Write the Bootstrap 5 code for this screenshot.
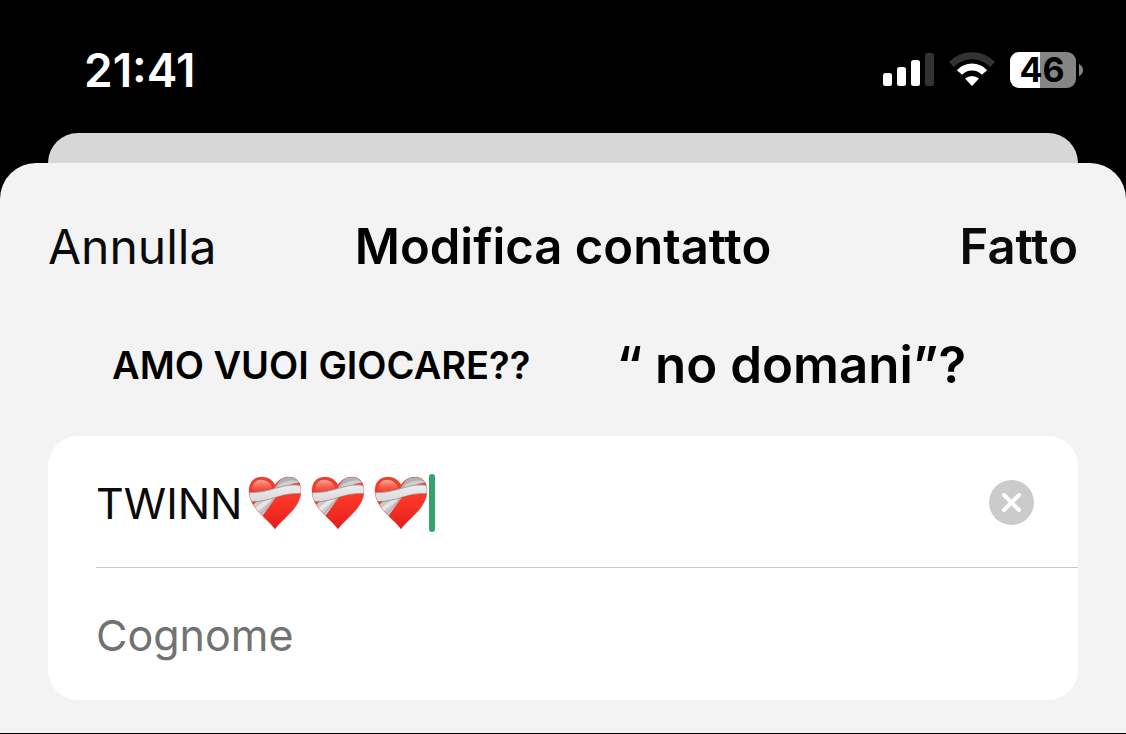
<!DOCTYPE html>
<html lang="it">
<head>
<meta charset="utf-8">
<meta name="viewport" content="width=device-width, initial-scale=1">
<title>Modifica contatto</title>
<link href="https://cdn.jsdelivr.net/npm/bootstrap@5.3.0/dist/css/bootstrap.min.css" rel="stylesheet">
<style>
  body { background: #000; font-family: Inter, "Liberation Sans", sans-serif; color: #0b0b0b; }
  .statusbar { height: 133px; padding: 6px 42px 0 84px; color: #fff; }
  .clock { font-size: 46px; line-height: 60px; font-weight: 600; }
  .sheet-behind { height: 30px; margin: 0 48px; background: #d7d7d7; border-radius: 30px 30px 0 0; }
  .sheet { background: #f3f3f3; border-radius: 36px 36px 0 0; padding: 56px 48px 33px; border-bottom: 1px solid #000; }
  .bar-text { font-size: 49px; line-height: 56px; color: #0b0b0b; white-space: nowrap; }
  .bar-text:hover { color: #0b0b0b; }
  .bar-light { font-size: 48px; }
  .side { flex: 1 1 0; }
  .captions { height: 96px; margin: 42px 0 23px; color: #000; font-weight: 600; line-height: 60px; white-space: nowrap; }
  .caption-a { font-size: 38px; margin-left: 64px; }
  .caption-b { font-size: 51px; margin-left: 86px; }
  .fields { background: #fff; border-radius: 30px; padding-left: 48px; }
  .field-row { height: 132px; padding-top: 2px; }
  .field-row:first-child { border-bottom: 1px solid #c9c9c9; }
  .field-row input { font-size: 43px; line-height: 56px; color: #0b0b0b; box-shadow: none; background: transparent; }
  .field-row input::placeholder { color: #727272; opacity: 1; }
  .first-name { width: 150px; }
  .caret { width: 6px; height: 58px; border-radius: 3px; background: #34a36b; }
  .clear-btn { margin-right: 44px; line-height: 0; }
</style>
</head>
<body>
<header class="statusbar d-flex align-items-center justify-content-between">
  <div class="clock">21:41</div>
  <svg width="204" height="60" viewBox="880 40 204 60" role="img" aria-label="Segnale, Wi-Fi, batteria 46%">
    <g fill="#fff">
      <rect x="883" y="73" width="9" height="13" rx="2.500"/>
      <rect x="897" y="67" width="9" height="19" rx="2.500"/>
      <rect x="911" y="60" width="9" height="26" rx="2.500"/>
      <rect x="925" y="53" width="9" height="33" rx="2.500" fill="#333"/>
    </g>
    <path d="M951.500 64.500A28.500 28.500 0 0 1 992.500 64.500" fill="none" stroke="#333" stroke-width="7"/>
    <path d="M959.500 72.500A17 17 0 0 1 984.500 72.500" fill="none" stroke="#fff" stroke-width="7"/>
    <path d="M972 86l-7-7.500q7-5 14 0z" fill="#fff"/>
    <path d="M1019 52h21v36h-21a9 9 0 0 1-9-9V61a9 9 0 0 1 9-9z" fill="#fff"/>
    <path d="M1040 52h27a9 9 0 0 1 9 9v18a9 9 0 0 1-9 9h-27z" fill="#858585"/>
    <path d="M1079 64q4 2 4 6t-4 6z" fill="#858585"/>
    <text x="1042" y="82" text-anchor="middle" font-size="34" font-weight="700" fill="#000">46</text>
  </svg>
</header>
<div class="sheet-behind"></div>
<main class="sheet">
  <nav class="d-flex align-items-center">
    <div class="side"><button type="button" class="btn p-0 border-0 bar-text bar-light">Annulla</button></div>
    <h1 class="bar-text fw-semibold m-0 text-black">Modifica contatto</h1>
    <div class="side text-end"><button type="button" class="btn p-0 border-0 bar-text fw-semibold">Fatto</button></div>
  </nav>
  <div class="captions d-flex align-items-center">
    <p class="caption-a mb-0">AMO VUOI GIOCARE??</p>
    <p class="caption-b mb-0">“ no domani”?</p>
  </div>
  <form class="fields">
    <div class="field-row d-flex align-items-center">
      <input class="form-control border-0 p-0 rounded-0 first-name" type="text" value="TWINN" aria-label="Nome">
      <svg width="183" height="60" viewBox="0 0 183 60" role="img" aria-label="Cuori bendati">
        <defs>
          <linearGradient id="red" x1="0" y1="0" x2="0" y2="1">
            <stop offset="0" stop-color="#e8412f"/><stop offset=".5" stop-color="#fb3526"/><stop offset="1" stop-color="#e01c1a"/>
          </linearGradient>
          <linearGradient id="gloss" x1="0" y1="0" x2="0" y2="1">
            <stop offset="0" stop-color="#ffc4ba" stop-opacity=".8"/><stop offset="1" stop-color="#ff7062" stop-opacity=".2"/>
          </linearGradient>
          <linearGradient id="gauze" x1="0" y1="0" x2="0" y2="1">
            <stop offset="0" stop-color="#eeeeee"/><stop offset="1" stop-color="#d8d8da"/>
          </linearGradient>
          <path id="heart-shape" d="M27 56C20 46 1 35 1 18C1 9 6 4 14 4C21 4 25 8 27 12C30 7 35 4 41 4C49 4 53 10 53 18C53 35 34 46 27 56Z"/>
          <clipPath id="heart-clip"><use href="#heart-shape"/></clipPath>
          <g id="heart">
            <g clip-path="url(#heart-clip)">
              <rect width="58" height="58" fill="url(#red)"/>
              <path d="M4 17C4 9 10 6 15 7C20 8 23 11 24 15Q12 20 4 17Z" fill="url(#gloss)"/>
              <path d="M26 17C29 9 36 2 44 2Q51 5 54 14L40 17Z" fill="#b3b1b2"/>
              <path d="M31 12Q40 6 49 8L51 10Q40 12 29 17Z" fill="#d0cfd0"/>
              <path d="M43 11L54 9V13L44 14Z" fill="#e14537"/>
              <path d="M28 24L13 45L3 34L11 26Z" fill="#cbc9cb"/>
              <path d="M23 25L8 37" stroke="#e6e6e7" stroke-width="4"/>
              <path d="M26 26L12 42" stroke="#aaa5a8" stroke-width="1"/>
              <path d="M0 20Q14 20 29 15T55 13L55 21Q43 20 29 24Q14 29 0 29Z" fill="url(#gauze)"/>
              <path d="M0 20Q14 20 29 15T55 13" fill="none" stroke="#a6a3a5" stroke-width="1"/>
              <path d="M2 29Q14 29 29 24T55 21" fill="none" stroke="#8a5555" stroke-width="1" opacity=".5"/>
            </g>
            <use href="#heart-shape" fill="none" stroke="#b92a2a" stroke-opacity=".25"/>
          </g>
        </defs>
        <use href="#heart" x="2"/><use href="#heart" x="65"/><use href="#heart" x="128"/>
      </svg>
      <span class="caret"></span>
      <button type="reset" class="btn p-0 border-0 rounded-circle ms-auto clear-btn" aria-label="Cancella testo">
        <svg width="45" height="45" viewBox="0 0 45 45"><circle cx="22.500" cy="22.500" r="22.500" fill="#cbcbcb"/><path d="M15 15l15 15M30 15l-15 15" stroke="#fff" stroke-width="4" stroke-linecap="round"/></svg>
      </button>
    </div>
    <div class="field-row d-flex align-items-center">
      <input class="form-control border-0 p-0 rounded-0" type="text" placeholder="Cognome" aria-label="Cognome">
    </div>
  </form>
</main>
<script src="https://cdn.jsdelivr.net/npm/bootstrap@5.3.0/dist/js/bootstrap.bundle.min.js"></script>
</body>
</html>
